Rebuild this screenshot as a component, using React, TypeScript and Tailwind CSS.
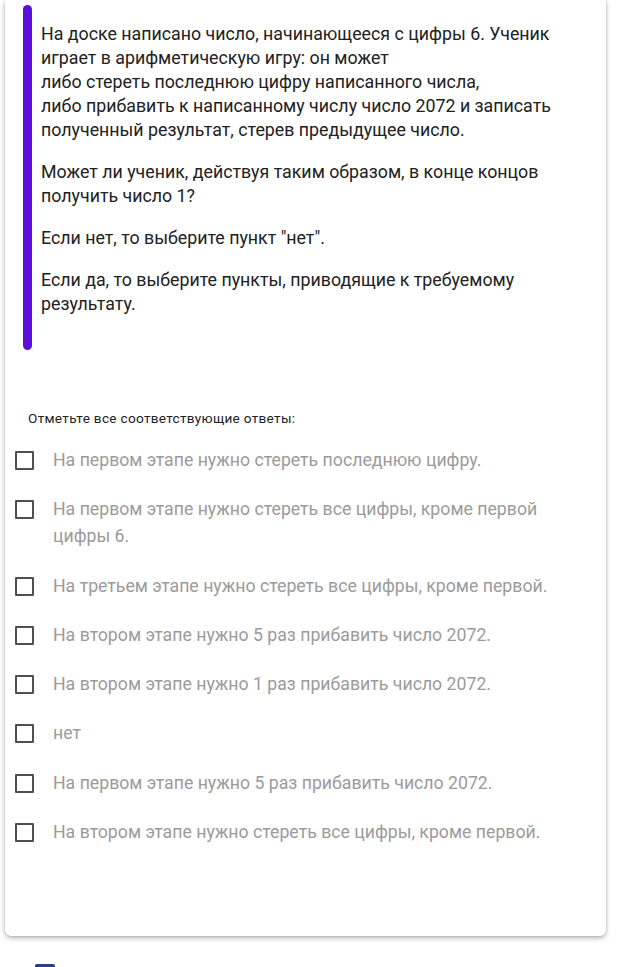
import React from 'react';

const options = [
  'На первом этапе нужно стереть последнюю цифру.',
  'На первом этапе нужно стереть все цифры, кроме первой цифры 6.',
  'На третьем этапе нужно стереть все цифры, кроме первой.',
  'На втором этапе нужно 5 раз прибавить число 2072.',
  'На втором этапе нужно 1 раз прибавить число 2072.',
  'нет',
  'На первом этапе нужно 5 раз прибавить число 2072.',
  'На втором этапе нужно стереть все цифры, кроме первой.',
];

const App: React.FC = () => {
  return (
    <div className="min-h-screen bg-white font-['Roboto','Noto_Sans',sans-serif] overflow-hidden">
      {/* Question card */}
      <div className="ml-[5px] w-[601px] rounded-b-[6px] bg-white shadow-[0_2px_5px_rgba(0,0,0,0.3),0_0_2px_rgba(0,0,0,0.15)] pt-[5px] pb-[90px]">
        {/* Task text with accent bar */}
        <div className="flex pl-[18px] pr-[30px]">
          <div className="w-[9px] shrink-0 rounded-full bg-[#5a0fdc]" />
          <div className="pl-[9px] pt-[17px] pb-[34px] text-[17.8px] leading-[24px] text-[#212121]">
            <p>
              На доске написано число, начинающееся с цифры 6. Ученик<br />
              играет в арифметическую игру: он может<br />
              либо стереть последнюю цифру написанного числа,<br />
              либо прибавить к написанному числу число 2072 и записать<br />
              полученный результат, стерев предыдущее число.
            </p>
            <p className="mt-[18px]">
              Может ли ученик, действуя таким образом, в конце концов<br />
              получить число 1?
            </p>
            <p className="mt-[18px]">Если нет, то выберите пункт "нет".</p>
            <p className="mt-[18px]">
              Если да, то выберите пункты, приводящие к требуемому<br />
              результату.
            </p>
          </div>
        </div>

        <div className="mt-[60px] pl-[23px] text-[13.6px] leading-[16px] text-[#222] tracking-[0.3px]">
          Отметьте все соответствующие ответы:
        </div>

        <ul className="mt-[21px] pl-[10px] pr-[40px] flex flex-col gap-[22.3px]">
          {options.map((text, i) => (
            <li key={i} className="flex items-start">
              <span className="mt-[4px] h-[19px] w-[19px] shrink-0 border-2 border-[#4f4f4f] rounded-[1px]" />
              <span className="pl-[19px] text-[17.7px] leading-[27px] text-[#9b9b9b]">{text}</span>
            </li>
          ))}
        </ul>
      </div>

      {/* Next question, partially visible */}
      <div className="mt-[28px] pl-[35px]">
        <div className="h-[20px] w-[20px] rounded-[2px] bg-[#2a3c8a]" />
      </div>
    </div>
  );
};

export default App;
